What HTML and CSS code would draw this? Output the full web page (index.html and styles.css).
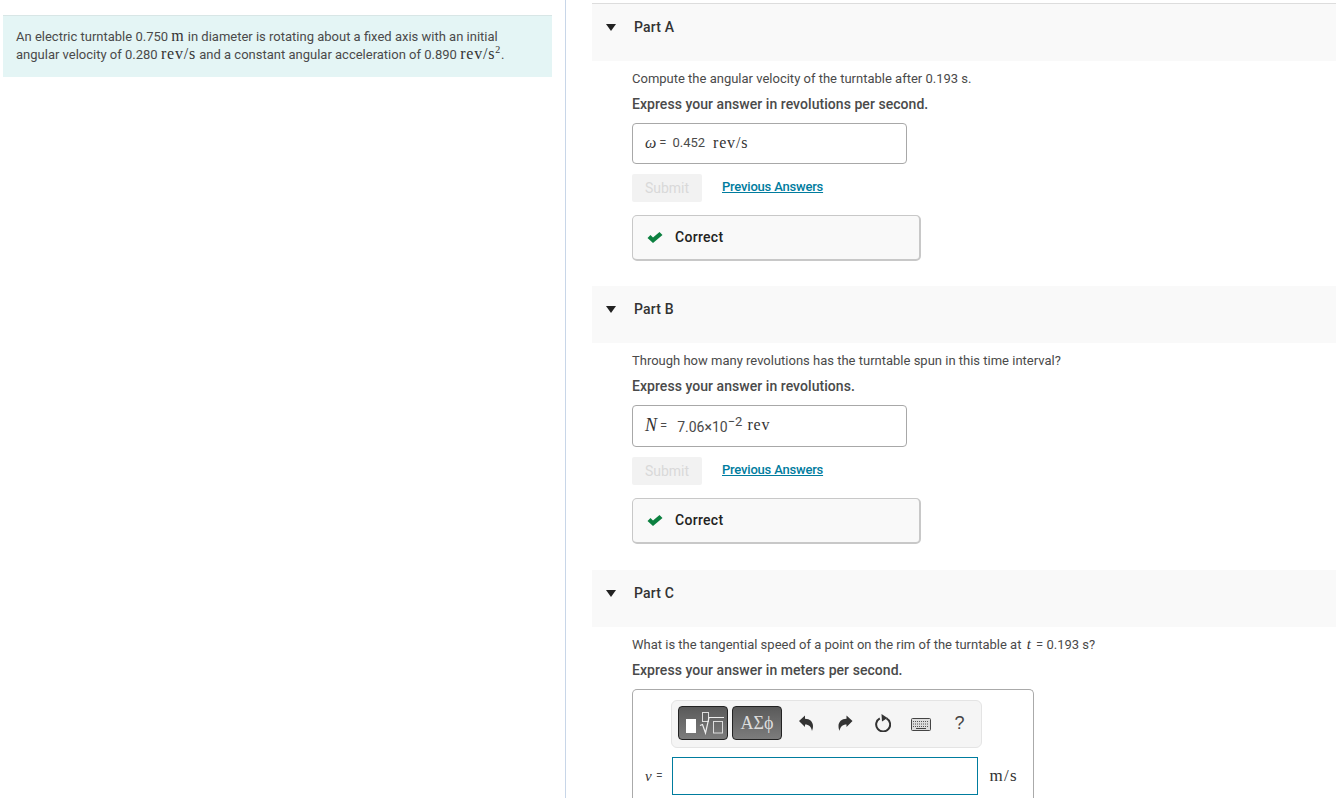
FILE: index.html
```html
<!DOCTYPE html>
<html lang="en">
<head>
<meta charset="utf-8">
<title>Turntable</title>
<link rel="stylesheet" href="styles.css">
</head>
<body>
<div class="page">
  <aside class="left">
    <div class="intro">An electric turntable 0.750 <span class="m">m</span> in diameter is rotating about a fixed axis with an initial angular velocity of 0.280 <span class="m">rev/s</span> and a constant angular acceleration of 0.890 <span class="m">rev/s<sup>2</sup></span>.</div>
  </aside>
  <main class="right">
    <section class="part part-a">
      <header class="part-head"><span class="caret"></span><span>Part A</span></header>
      <div class="part-body">
        <p class="q">Compute the angular velocity of the turntable after 0.193 s.</p>
        <p class="ex">Express your answer in revolutions per second.</p>
        <div class="ans"><i class="var w">ω</i><span class="eq">=</span><span class="val">0.452</span><span class="m unit">rev/s</span></div>
        <div class="actions"><span class="submit">Submit</span><a class="prev" href="#">Previous Answers</a></div>
        <div class="correct"><svg class="check" viewBox="0 0 16 11"><path d="M0.5 6 L3.5 3 L6 5.5 L12.5 0 L15.5 3 L6 11 Z" fill="#0c8040"/></svg><span>Correct</span></div>
      </div>
    </section>
    <section class="part part-b">
      <header class="part-head"><span class="caret"></span><span>Part B</span></header>
      <div class="part-body">
        <p class="q">Through how many revolutions has the turntable spun in this time interval?</p>
        <p class="ex">Express your answer in revolutions.</p>
        <div class="ans tall"><i class="var n">N</i><span class="eq">=</span><span class="sci">7.06×10<sup>−2</sup></span><span class="m unit">rev</span></div>
        <div class="actions"><span class="submit">Submit</span><a class="prev" href="#">Previous Answers</a></div>
        <div class="correct"><svg class="check" viewBox="0 0 16 11"><path d="M0.5 6 L3.5 3 L6 5.5 L12.5 0 L15.5 3 L6 11 Z" fill="#0c8040"/></svg><span>Correct</span></div>
      </div>
    </section>
    <section class="part part-c">
      <header class="part-head"><span class="caret"></span><span>Part C</span></header>
      <div class="part-body">
        <p class="q">What is the tangential speed of a point on the rim of the turntable at <i class="tvar">t</i> = 0.193 s?</p>
        <p class="ex">Express your answer in meters per second.</p>
        <div class="editor">
          <div class="toolbar">
            <span class="tbtn tmpl"><svg width="48" height="32" viewBox="0 0 48 32"><rect x="7" y="12" width="10" height="14" fill="#fff"/><rect x="23.5" y="5.5" width="6" height="9" fill="none" stroke="#ddd"/><path d="M21 18.5 L23.5 17.5 L26.5 26 L30 10.5 L45 10.5" fill="none" stroke="#eee" stroke-width="1.2"/><rect x="34.5" y="14.5" width="9" height="11.5" fill="none" stroke="#ddd"/></svg></span>
            <span class="tbtn greek">ΑΣϕ</span>
            <span class="tool t-undo"><svg width="14" height="16" viewBox="0 0 14 16"><path d="M0 6 L6 0.5 L6 3.8 C11 3.8 14 7 14 11 C14 13 13.5 14.5 13 16 C12.5 12 10 9.4 6 9.4 L6 12 Z" fill="#333"/></svg></span>
            <span class="tool t-redo"><svg width="15" height="16" viewBox="0 0 14 16"><path d="M14 6 L8 0.5 L8 3.8 C3 3.8 0 7 0 11 C0 13 0.5 14.5 1 16 C1.5 12 4 9.4 8 9.4 L8 12 Z" fill="#333"/></svg></span>
            <span class="tool t-reset"><svg width="16" height="18" viewBox="0 0 16 18"><path d="M4.8 4.3 A7 7 0 1 0 11.5 4.3" fill="none" stroke="#333" stroke-width="2"/><path d="M6.5 0 L12.5 4 L7 7.5 Z" fill="#333"/></svg></span>
            <span class="tool t-kb"><svg width="20" height="13" viewBox="0 0 20 13"><rect x="0.5" y="0.5" width="19" height="12" rx="1" fill="#ddd" stroke="#444"/><path d="M2 3.5 H18 M2 6 H18 M2 8.5 H18" stroke="#555" stroke-width="1" stroke-dasharray="1 1"/><path d="M5 10.5 H15" stroke="#444"/></svg></span>
            <span class="tool t-help">?</span>
          </div>
          <div class="input-row"><i class="var v">v</i><span class="eq small">=</span><span class="field"></span><span class="m unit2">m/s</span></div>
        </div>
      </div>
    </section>
  </main>
</div>
</body>
</html>
```

FILE: styles.css
```css
html, body {
  margin: 0;
  padding: 0;
  height: 798px;
  overflow: hidden;
  background: #fff;
}
body {
  font-family: Roboto, "Liberation Sans", sans-serif;
  font-size: 13px;
  color: #4a4a4a;
}
.page {
  display: flex;
  height: 798px;
}
.left {
  width: 565px;
  flex: none;
  border-right: 1px solid #c8d6e8;
  padding-top: 15px;
}
.intro {
  margin-left: 3px;
  padding: 12px 13px 0;
  width: 523px;
  height: 49px;
  background: #e4f5f5;
  border-top: 1px solid #d8e6e6;
  line-height: 18px;
}
.m {
  font-family: "Liberation Serif", serif;
  font-size: 16px;
  letter-spacing: 0.8px;
  line-height: 0;
  color: #333;
}
.intro sup {
  font-size: 10px;
  line-height: 0;
}
.right {
  flex: 1;
  padding-top: 3px;
  min-width: 0;
}
.part-a { margin-bottom: 25px; }
.part-b { margin-bottom: 26px; }
.part-head {
  height: 57px;
  background: #f9f9f9;
  margin-left: 26px;
  padding: 14px 0 0 42px;
  box-sizing: border-box;
  font-size: 14px;
  font-weight: 500;
  letter-spacing: 0.2px;
  color: #333;
  position: relative;
  line-height: 18px;
}
.part-a .part-head {
  height: 58px;
  border-top: 1px solid #ddd;
}
.caret {
  position: absolute;
  left: 14px;
  top: 20px;
  border-left: 5.5px solid transparent;
  border-right: 5.5px solid transparent;
  border-top: 7px solid #222;
}
.part-body {
  padding: 9px 0 0 66px;
}
.q {
  margin: 0;
  line-height: 18px;
}
.ex {
  margin: 8px 0 0;
  line-height: 18px;
  font-size: 14px;
  font-weight: 500;
  letter-spacing: 0.05px;
  position: relative;
  top: -1px;
}
.ans {
  margin-top: 9px;
  width: 275px;
  height: 41px;
  box-sizing: border-box;
  border: 1px solid #a8a8a8;
  border-radius: 4px;
  display: flex;
  align-items: center;
  padding: 0 0 2px 12px;
}
.ans.tall { height: 42px; }
.ans.tall .unit { margin-left: 5px; }
.var {
  font-family: "Liberation Serif", serif;
  color: #333;
}
.var.w { font-size: 16px; }
.var.n { font-size: 18px; }
.var.v { font-size: 15px; width: 8px; }
.eq {
  margin: 0 7px 0 3px;
}
.eq.small {
  margin: 0 0 0 3px;
  font-size: 12px;
}
.val { margin-left: -1px; }
.unit { margin-left: 8px; }
.sci {
  margin-left: 3px;
  position: relative;
  top: 2px;
  font-size: 14px;
}
.sci sup {
  font-size: 13px;
  line-height: 0;
}
.actions {
  display: flex;
  align-items: center;
  margin-top: 10px;
  height: 28px;
}
.submit {
  width: 70px;
  height: 28px;
  line-height: 29px;
  font-size: 14px;
  background: #f2f2f2;
  color: #d9d9d9;
  text-align: center;
  border-radius: 2px;
}
.prev {
  margin: 0 0 3px 20px;
  color: #007c9e;
  font-size: 13px;
  font-weight: 500;
  letter-spacing: -0.2px;
}
.correct {
  margin-top: 13px;
  width: 289px;
  height: 46px;
  box-sizing: border-box;
  border: 1px solid #c8c8c8;
  border-right-width: 2px;
  border-bottom-width: 2px;
  border-radius: 5px;
  background: #f9f9f9;
  display: flex;
  align-items: center;
  padding: 0 0 2px 14px;
  font-size: 14px;
  font-weight: 500;
  letter-spacing: 0.3px;
  color: #222;
}
.check {
  width: 16px;
  height: 11px;
  margin: 1px 12px 0 0;
}
.tvar {
  font-family: "Liberation Serif", serif;
  font-size: 15px;
  line-height: 0;
  color: #333;
  margin: 0 2px;
}
.editor {
  margin-top: 9px;
  width: 402px;
  height: 120px;
  box-sizing: border-box;
  border: 1px solid #aaa;
  border-bottom: 0;
  border-radius: 5px 5px 0 0;
  padding: 10px 0 0 38px;
}
.toolbar {
  width: 311px;
  height: 48px;
  box-sizing: border-box;
  border: 1px solid #e4e4e4;
  border-radius: 6px;
  background: #f5f5f5;
  display: flex;
  align-items: center;
  padding: 0 0 2px 6px;
}
.tbtn {
  width: 50px;
  height: 34px;
  flex: none;
  box-sizing: border-box;
  border: 1px solid #222;
  border-radius: 4px;
  background: linear-gradient(#5a5a5a, #7c7c7c);
  color: #ddd;
  display: flex;
  align-items: center;
  justify-content: center;
}
.tmpl { margin-right: 4px; }
.tmpl svg { flex: none; }
.greek {
  font-family: "Liberation Serif", serif;
  font-size: 18px;
}
.tool {
  display: flex;
  align-items: center;
  justify-content: center;
  color: #444;
}
.t-undo { margin-left: 17px; width: 14px; }
.t-redo { margin-left: 25px; width: 15px; }
.t-reset { margin-left: 22px; width: 16px; }
.t-kb { margin-left: 20px; width: 20px; padding-top: 3px; }
.t-help {
  margin-left: 24px;
  width: 9px;
  font-size: 18px;
  font-family: "Liberation Sans", sans-serif;
}
.input-row {
  display: flex;
  align-items: center;
  margin-top: 9px;
  margin-left: -26px;
}
.field {
  width: 304px;
  height: 36px;
  border: 1px solid #007c9e;
  margin-left: 9px;
}
.unit2 {
  margin-left: 12px;
  font-size: 17px;
  letter-spacing: 1.2px;
}
```
